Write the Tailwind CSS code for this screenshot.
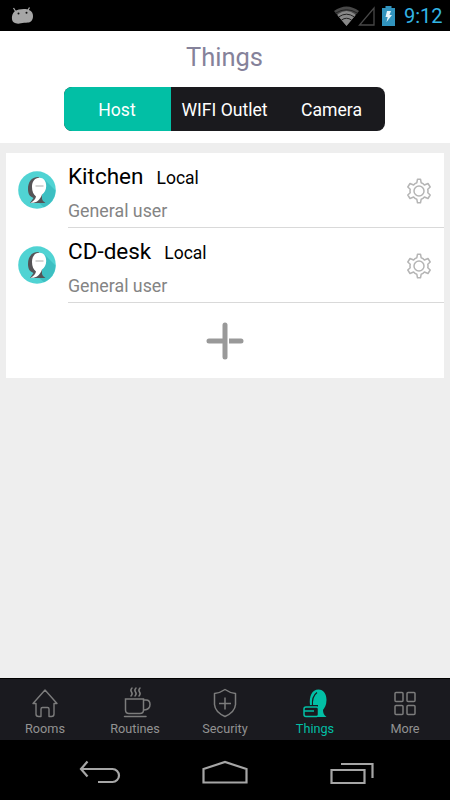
<!doctype html>
<html lang="en">
  <head>
    <meta charset="utf-8" />
    <meta name="viewport" content="width=device-width, initial-scale=1" />
    <title>Things</title>
    <script src="https://cdn.jsdelivr.net/npm/@tailwindcss/browser@4"></script>
  </head>

  <body class="bg-black font-['Roboto',sans-serif]">
    <!-- Shared symbols for the host rows -->
    <svg class="hidden">
      <symbol id="host" viewBox="0 0 38 38">
        <circle cx="19" cy="19" r="18.8" fill="#50d3d3" />
        <path d="M27 9 37.500 19.500a18.500 18.500 0 0 1-11.500 16.800L20 31Z" fill="#3dbfc2" />
        <path d="M20.500 6C13 6 10 11.500 10 18c0 4.500 1.500 7.500 5.500 9l-3.500 5h15.500q-3-1.500-3.500-4V12Z" fill="#555356" />
        <path d="M21.500 6.800c-5 0-7.500 4-7.500 9.200 0 4.500 1.500 7.500 4 9.500-.3 2.500-2.500 4.800-5.500 6.300 5.500.5 9.500-2.500 11.500-8.300 2.500-2 4.200-4.500 4.200-8.500 0-5-2.700-8.200-6.700-8.200Z" fill="#fff" />
        <path d="M17.500 15h8" stroke="#aaa" stroke-width="1" />
      </symbol>
      <symbol id="gear" viewBox="0 0 26 26">
        <path
          d="M11.500 1.200h3l.7 3.600q2 .6 3.200 2.200l3.600-1.500L24.200 9l-2.400 2.300q.4 1.700 0 3.400L24.200 17 22 20.500 18.400 19q-1.200 1.600-3.200 2.200l-.7 3.600h-3l-.7-3.600Q8.800 20.600 7.600 19L4 20.500 1.800 17l2.400-2.300q-.4-1.700 0-3.400L1.800 9 4 5.500 7.600 7q1.200-1.600 3.200-2.200Z"
          fill="none" stroke="#b5b5b5" stroke-width="1.500" stroke-linejoin="round"
        />
        <circle cx="13" cy="13" r="5" fill="none" stroke="#b5b5b5" stroke-width="1.500" />
      </symbol>
    </svg>

    <div class="flex h-[800px] w-[450px] flex-col overflow-hidden">
      <!-- Status bar -->
      <div class="flex h-[31px] shrink-0 items-center bg-black">
        <svg class="ml-[11px] h-[18px] w-[23px]" viewBox="0 0 23 18">
          <path d="m5 5-2.500-4M16.500 4l2-3.500" stroke="#a6a6a6" stroke-width="1.300" />
          <path d="M4 4C7 2 15 1 18 3c3 1 4 3.500 4 6 0 4-2 6.500-5 6.500-3 .3-5 0-7 .8-4 1-8.500 0-9-4C.5 9 1.500 6 4 4Z" fill="#a6a6a6" />
          <circle cx="7.500" cy="6.500" r="1" fill="#111" />
          <circle cx="15.500" cy="5.800" r="1" fill="#111" />
        </svg>
        <svg class="ml-[300px] h-[20px] w-[25px]" viewBox="0 0 25 20">
          <path d="M0 5Q12.500-4 25 5L12.500 20Z" fill="#484848" />
          <path d="m3.500 9.200.8-1.200q8.200-6 16.400 0l.8 1.200-9 10.800Z" fill="#888" />
          <path d="M1.500 7.200q11-7 22 0M5 10.700q7.500-5 15 0M7.500 14q5-3.500 10 0" fill="none" stroke="#222" stroke-width="1" />
        </svg>
        <svg class="-ml-[1px] h-[20px] w-[18px]" viewBox="0 0 18 20">
          <path d="M16 2v17H1.500Z" fill="none" stroke="#484848" stroke-width="1.300" />
        </svg>
        <svg class="ml-[6px] h-[20px] w-[13px]" viewBox="0 0 13 20">
          <path d="M3.500 0h6v2H13v18H0V2h3.500Z" fill="#3193bd" />
          <path d="M5 5h4L7.500 9H10l-5.500 7 1.200-5H3.500Z" fill="#e8f5fa" />
        </svg>
        <span class="ml-[9px] mt-[1px] text-[20px] leading-none text-[#33b5e5]">9:12</span>
      </div>

      <!-- Title and segmented control -->
      <div class="flex h-[112px] shrink-0 flex-col items-center bg-white pr-px">
        <h1 class="mt-[11px] text-[25.500px] leading-[30px] text-[#85829a]">Things</h1>
        <div class="mt-[15px] grid h-[43.500px] w-[321px] grid-cols-3 overflow-hidden rounded-lg bg-[#1a1a1e] text-[17.600px] text-white">
          <button class="bg-[#02bfa5] pt-[2px] pr-px">Host</button>
          <button class="whitespace-nowrap pt-[2px]">WIFI Outlet</button>
          <button class="pt-[2px]">Camera</button>
        </div>
      </div>

      <!-- Hosts -->
      <div class="grow bg-[#eee] px-[6px] pt-[10px]">
        <div class="h-[225px] bg-white">
          <div class="flex h-[75px]">
            <svg class="ml-[12px] mt-[18px] size-[38px]"><use href="#host" /></svg>
            <div class="ml-[12px] flex grow justify-between border-b border-[#d9d9d9]">
              <div>
                <div class="mt-[9px] flex items-baseline leading-[28px]">
                  <span class="text-[22.500px] text-black">Kitchen</span>
                  <span class="ml-[13px] text-[17.500px] text-black">Local</span>
                </div>
                <p class="mt-[9px] text-[17.800px] leading-[20px] text-[#848484]">General user</p>
              </div>
              <svg class="mr-[12px] mt-[25px] size-[26px]"><use href="#gear" /></svg>
            </div>
          </div>
          <div class="flex h-[75px]">
            <svg class="ml-[12px] mt-[18px] size-[38px]"><use href="#host" /></svg>
            <div class="ml-[12px] flex grow justify-between border-b border-[#d9d9d9]">
              <div>
                <div class="mt-[9px] flex items-baseline leading-[28px]">
                  <span class="text-[22.500px] text-black">CD-desk</span>
                  <span class="ml-[13px] text-[17.500px] text-black">Local</span>
                </div>
                <p class="mt-[9px] text-[17.800px] leading-[20px] text-[#848484]">General user</p>
              </div>
              <svg class="mr-[12px] mt-[25px] size-[26px]"><use href="#gear" /></svg>
            </div>
          </div>
          <div class="flex h-[75px] items-center justify-center">
            <svg class="size-[38px]" viewBox="0 0 38 38" fill="#999">
              <rect x="16.500" y="0.500" width="5" height="37" rx="2.500" />
              <path d="M3 16.500h14v5H3a2.500 2.500 0 0 1 0-5ZM23 16.500h12a2.500 2.500 0 0 1 0 5H23Z" />
            </svg>
          </div>
        </div>
      </div>

      <!-- Tabs -->
      <div class="grid h-[62px] shrink-0 grid-cols-5 border-t border-black bg-[#1a1a1f] text-[12.700px] leading-[16px] text-[#929292]">
        <div class="flex flex-col items-center">
          <svg class="mt-[8px] h-[32px] w-[30px]" viewBox="0 0 30 32" fill="none" stroke="#7c7c7c" stroke-width="1.400" stroke-linejoin="round">
            <path d="M15 3 3 16.500h3V27q0 2.500 2.500 2.500H11V22q0-1.500 1.500-1.500h5Q19 20.500 19 22v7.500h2.500Q24 29.500 24 27V16.500h3Z" />
          </svg>
          <span class="mt-[2px]">Rooms</span>
        </div>
        <div class="flex flex-col items-center">
          <svg class="mt-[7px] ml-[4px] h-[32px] w-[30px]" viewBox="0 0 30 32" fill="none" stroke="#7c7c7c" stroke-width="1.500" stroke-linecap="round">
            <path d="M3.500 13h18v11q0 3.500-3.500 3.500H7Q3.500 27.500 3.500 24ZM22 14h2q4 0 4 4.500 0 5-6 5.500M2.500 30.500h21.500M10 2q-2 2-.5 4t-.5 4M14 2q-2 2-.5 4t-.5 4M18 2q-2 2-.5 4t-.5 4" />
          </svg>
          <span class="mt-[3px]">Routines</span>
        </div>
        <div class="flex flex-col items-center">
          <svg class="mt-[8px] h-[32px] w-[30px]" viewBox="0 0 30 32" fill="none" stroke="#7c7c7c" stroke-width="1.500" stroke-linejoin="round">
            <path d="M15 2.500Q10 6 4.500 6.500v11Q5 25 15 29.500 25 25 25.500 17.500v-11Q20 6 15 2.500ZM15 10.500v12M9 16.500h12" />
          </svg>
          <span class="mt-[2px]">Security</span>
        </div>
        <div class="flex flex-col items-center text-[#02bfa5]">
          <svg class="mt-[8px] h-[32px] w-[30px]" viewBox="0 0 30 32">
            <path d="M10 18C9 9 12 2.500 18.500 2.500c5 0 8 4.500 8 10.500 0 5-2 8-3.500 10 0 3 1 5 3.500 7H18V18Z" fill="#02bfa5" />
            <path d="M12.500 19c-.5-6 1-11 4.500-13.500" fill="none" stroke="#1a1a1f" stroke-width="1.200" />
            <path d="M6 20h10.500q2 0 2 2v5.500q0 2-2 2H6q-2 0-2-2V22q0-2 2-2ZM4 24h10" fill="#1a1a1f" stroke="#02bfa5" stroke-width="1.500" stroke-linejoin="round" />
          </svg>
          <span class="mt-[2px]">Things</span>
        </div>
        <div class="flex flex-col items-center">
          <svg class="mt-[8px] h-[32px] w-[30px]" viewBox="0 0 30 32" fill="none" stroke="#7c7c7c" stroke-width="1.500">
            <rect x="5" y="5.500" width="8" height="9" rx="1" />
            <rect x="17" y="5.500" width="8" height="9" rx="1" />
            <rect x="5" y="18.500" width="8" height="9" rx="1" />
            <rect x="17" y="18.500" width="8" height="9" rx="1" />
          </svg>
          <span class="mt-[2px]">More</span>
        </div>
      </div>

      <!-- System navigation -->
      <div class="flex h-[60px] shrink-0 justify-between bg-black px-[78px]">
        <svg class="mt-[19px] h-[26px] w-[43px]" viewBox="0 0 43 26" fill="none" stroke="#a6a6a6" stroke-width="2.200">
          <path d="M9.500 2.500 3 10l6.500 7.500M3 10h31.500a6.250 6.250 0 0 1 0 13H20" />
        </svg>
        <svg class="mt-[16px] h-[28px] w-[48px]" viewBox="0 0 48 28" fill="none" stroke="#a6a6a6" stroke-width="2.200">
          <path d="M1.500 26.500V13L23 6l21.500 7v13.500Z" />
        </svg>
        <svg class="mt-[19px] -mr-[2px] h-[26px] w-[44px]" viewBox="0 0 44 26" fill="none" stroke="#a6a6a6" stroke-width="2.200">
          <path d="M1.500 11h33v13h-33ZM11 5h31.500v14" />
        </svg>
      </div>
    </div>
  </body>
</html>
